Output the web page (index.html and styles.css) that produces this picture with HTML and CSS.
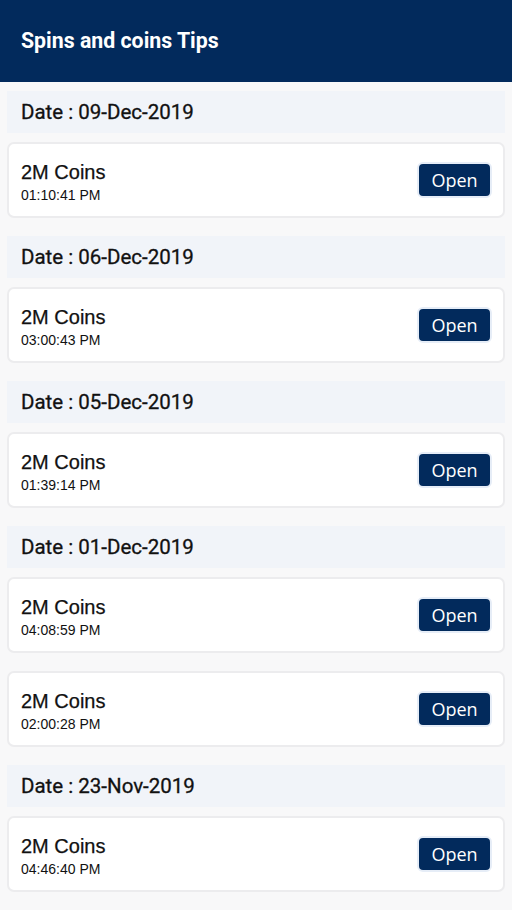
FILE: index.html
```html
<!DOCTYPE html>
<html>
<head>
<meta charset="utf-8">
<link rel="stylesheet" href="styles.css">
</head>
<body>
<header class="appbar"><h1 class="title">Spins and coins Tips</h1></header>
<main class="list">
  <div class="date">Date : 09-Dec-2019</div>
  <div class="card"><div class="info"><div class="name">2M Coins</div><div class="time">01:10:41 PM</div></div><button class="open">Open</button></div>
  <div class="date">Date : 06-Dec-2019</div>
  <div class="card"><div class="info"><div class="name">2M Coins</div><div class="time">03:00:43 PM</div></div><button class="open">Open</button></div>
  <div class="date">Date : 05-Dec-2019</div>
  <div class="card"><div class="info"><div class="name">2M Coins</div><div class="time">01:39:14 PM</div></div><button class="open">Open</button></div>
  <div class="date">Date : 01-Dec-2019</div>
  <div class="card"><div class="info"><div class="name">2M Coins</div><div class="time">04:08:59 PM</div></div><button class="open">Open</button></div>
  <div class="card"><div class="info"><div class="name">2M Coins</div><div class="time">02:00:28 PM</div></div><button class="open">Open</button></div>
  <div class="date">Date : 23-Nov-2019</div>
  <div class="card"><div class="info"><div class="name">2M Coins</div><div class="time">04:46:40 PM</div></div><button class="open">Open</button></div>
</main>
</body>
</html>
```
FILE: styles.css
```css
html, body { margin: 0; padding: 0; }
body {
  background: #f8f8f9;
  font-family: Roboto, "Liberation Sans", sans-serif;
  width: 512px;
  height: 910px;
  overflow: hidden;
}
.appbar {
  background: #022a5c;
  height: 82px;
  display: flex;
  align-items: center;
  padding: 0 21px;
  box-sizing: border-box;
}
.title {
  margin: 0;
  color: #fff;
  font-size: 21.3px;
  font-weight: 700;
  padding-bottom: 1px;
}
.list {
  display: flex;
  flex-direction: column;
  padding: 9px 7px 0;
}
.date {
  background: #f1f4f9;
  height: 42px;
  display: flex;
  align-items: center;
  padding: 0 14px;
  font-size: 20.5px;
  font-weight: 400;
  color: #111;
  margin-bottom: 9px;
  -webkit-text-stroke: 0.3px #111;
}
.card {
  background: #fff;
  border: 2px solid #ececee;
  border-radius: 7px;
  height: 76px;
  box-sizing: border-box;
  display: flex;
  align-items: center;
  justify-content: space-between;
  padding: 0 11px 0 12px;
  margin-bottom: 18px;
}
.info { display: flex; flex-direction: column; }
.name {
  font-family: "Liberation Sans", Arial, sans-serif;
  font-size: 20px;
  color: #111;
  line-height: 22px;
  margin-top: 5px;
  -webkit-text-stroke: 0.25px #111;
}
.time {
  font-family: "Liberation Sans", Arial, sans-serif;
  font-size: 14px;
  color: #111;
  line-height: 18px;
  margin-top: 3px;
}
.open {
  background: #022a5c;
  color: #fff;
  border: 2px solid #e6edf7;
  border-radius: 6px;
  width: 75px;
  height: 36px;
  font-family: "Open Sans", sans-serif;
  font-size: 18px;
  padding: 0;
}
```
